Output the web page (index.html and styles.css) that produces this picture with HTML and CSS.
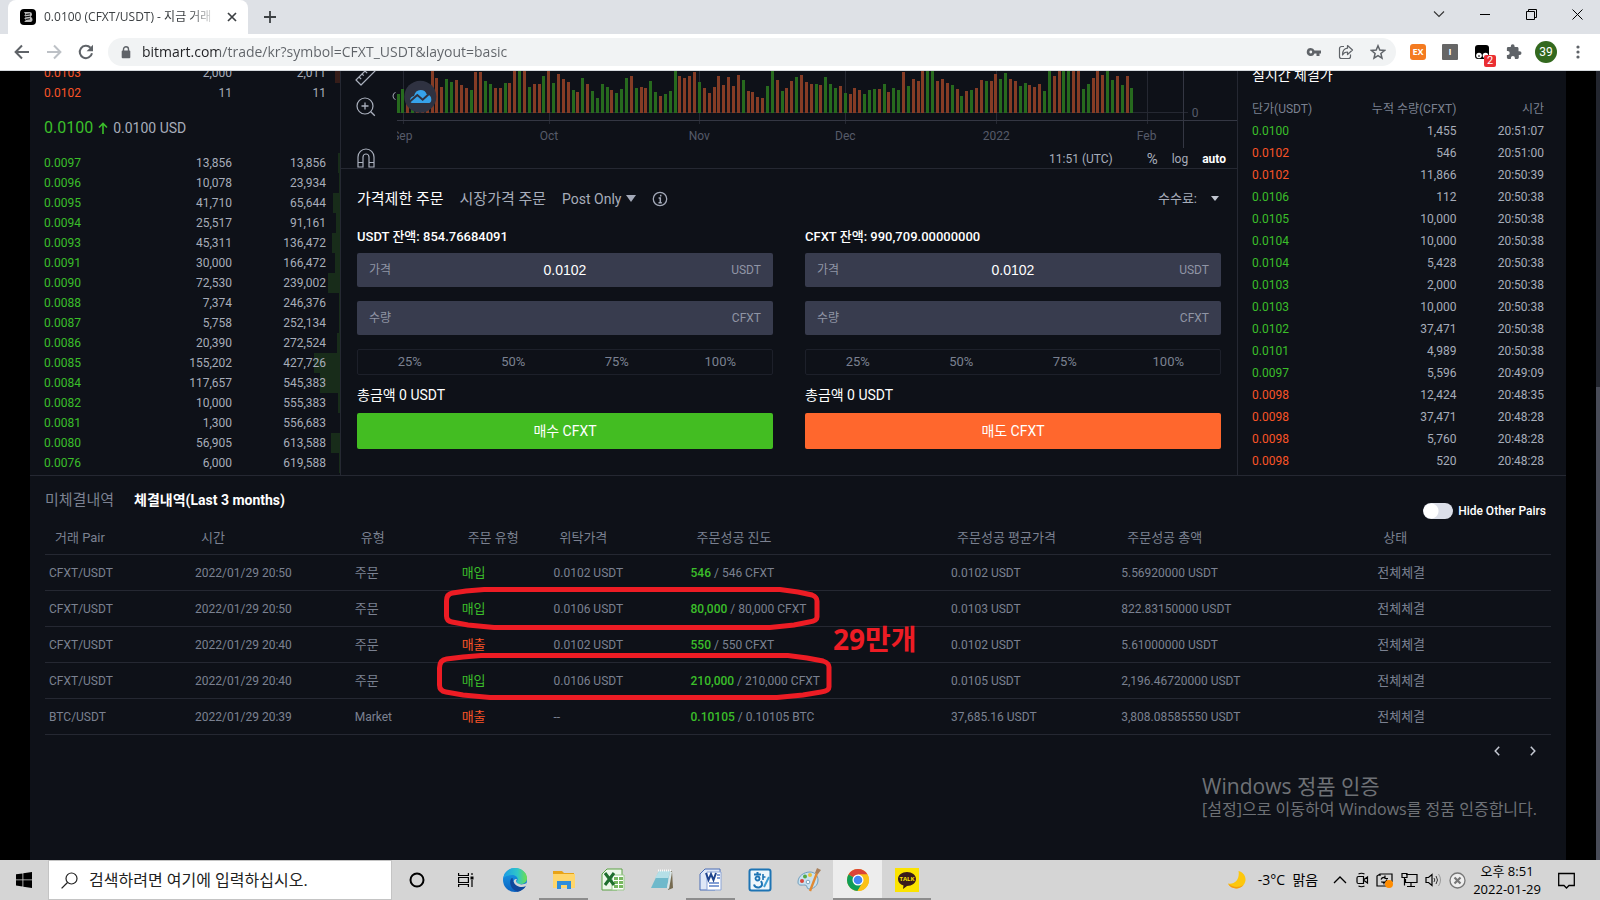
FILE: index.html
```html
<!DOCTYPE html>
<html lang="ko">
<head>
<meta charset="utf-8">
<title>0.0100 (CFXT/USDT) - 지금 거래</title>
<link rel="stylesheet" href="styles.css">
</head>
<body>
<header class="browser">
  <div class="tabstrip">
    <div class="tab">
      <svg class="favicon" width="16" height="16" viewBox="0 0 16 16"><rect width="16" height="16" rx="4" fill="#000"/><path d="M4 3h5.500q2.500 0 2.500 2.300 0 1.700-1.500 2.400 2 .6 2 2.700Q12.500 13 9.500 13H4l1.500-1.200V10L4 9.600l1.600-1V7L4 6.400l1.500-1z" fill="#bbb"/><path d="M6 5.400l4-.5M6 7.800l4-.6M6 10.400l4-.6" stroke="#000" stroke-width="1"/></svg>
      <span class="tab-title">0.0100 (CFXT/USDT) - 지금 거래</span>
      <button class="icon-btn tab-close" aria-label="탭 닫기"><svg width="10" height="10" viewBox="0 0 10 10"><path d="M1 1l8 8M9 1L1 9" stroke="#3c4043" stroke-width="1.700"/></svg></button>
    </div>
    <button class="icon-btn new-tab" aria-label="새 탭"><svg width="12" height="12" viewBox="0 0 12 12"><path d="M6 0v12M0 6h12" stroke="#3c4043" stroke-width="1.800"/></svg></button>
    <div class="window-controls">
      <button class="icon-btn" aria-label="탭 검색"><svg width="12" height="12" viewBox="0 0 12 12"><path d="M1 3.500l5 5 5-5" fill="none" stroke="#333" stroke-width="1.100"/></svg></button>
      <button class="icon-btn" aria-label="최소화"><svg width="10" height="10" viewBox="0 0 10 10"><path d="M0 5.500h10" stroke="#000"/></svg></button>
      <button class="icon-btn" aria-label="이전 크기로"><svg width="11" height="11" viewBox="0 0 11 11"><path d="M.5 2.500h8v8h-8zM2.500 2.500v-2h8v8h-2" fill="none" stroke="#000"/></svg></button>
      <button class="icon-btn" aria-label="닫기"><svg width="11" height="11" viewBox="0 0 11 11"><path d="M.5.5l10 10M10.500.5l-10 10" stroke="#000"/></svg></button>
    </div>
  </div>
  <div class="toolbar">
    <button class="icon-btn" aria-label="뒤로"><svg width="16" height="16" viewBox="0 0 16 16"><path d="M15 8H2M8 1.500L1.600 8 8 14.500" fill="none" stroke="#5f6368" stroke-width="2"/></svg></button>
    <button class="icon-btn" aria-label="앞으로"><svg width="16" height="16" viewBox="0 0 16 16"><path d="M1 8h13M8 1.500L14.400 8 8 14.500" fill="none" stroke="#bdc1c6" stroke-width="2"/></svg></button>
    <button class="icon-btn" aria-label="새로고침"><svg width="16" height="16" viewBox="0 0 16 16"><path d="M14 9.300A6.200 6.200 0 1 1 12.500 3.700" fill="none" stroke="#5f6368" stroke-width="2"/><path d="M15 .8v6.400H8.600z" fill="#5f6368"/></svg></button>
    <div class="omnibox">
      <svg width="10" height="13" viewBox="0 0 10 13"><path d="M2.500 5V3.300a2.500 2.500 0 0 1 5 0V5" fill="none" stroke="#5f6368" stroke-width="1.400"/><rect x=".7" y="4.600" width="8.600" height="7.600" rx="1" fill="#5f6368"/></svg>
      <input class="url" type="text" aria-label="주소창" value="bitmart.com/trade/kr?symbol=CFXT_USDT&amp;layout=basic">
      <button class="icon-btn" aria-label="비밀번호"><svg width="16" height="16" viewBox="0 0 16 16"><path d="M4.800 4a4 4 0 1 0 3.700 5.400h2V12h3V9.400H15V6.600H8.500A4 4 0 0 0 4.800 4zm0 2.600a1.400 1.400 0 1 1 0 2.800 1.400 1.400 0 0 1 0-2.800z" fill="#5f6368"/></svg></button>
      <button class="icon-btn" aria-label="공유"><svg width="16" height="16" viewBox="0 0 16 16"><path d="M6 2.500H3.500a2 2 0 0 0-2 2v8a2 2 0 0 0 2 2h7a2 2 0 0 0 2-2v-2" fill="none" stroke="#5f6368" stroke-width="1.200"/><path d="M9.500 1.500L14.500 6l-5 4.500V8C7 8 5.500 9 4.500 11c0-4 2-6.500 5-6.800z" fill="none" stroke="#5f6368" stroke-width="1.200" stroke-linejoin="round"/></svg></button>
      <button class="icon-btn" aria-label="북마크"><svg width="16" height="16" viewBox="0 0 16 16"><path d="M8 1.800l1.800 4.300 4.700.4-3.600 3 1.100 4.600L8 11.700l-4 2.400 1.100-4.600-3.600-3 4.700-.4z" fill="none" stroke="#5f6368" stroke-width="1.500"/></svg></button>
    </div>
    <button class="icon-btn ext ext-ex" aria-label="EX 확장">EX</button>
    <button class="icon-btn ext ext-i" aria-label="I 확장">I</button>
    <button class="icon-btn ext ext-bw" aria-label="확장"><svg width="14" height="14" viewBox="0 0 14 14"><rect width="14" height="14" rx="3" fill="#000"/><circle cx="4" cy="10.500" r="2.800" fill="#fff"/><circle cx="10.500" cy="10.500" r="2.800" fill="#fff"/><circle cx="4" cy="11" r="1" fill="#555"/></svg><span class="ext-count">2</span></button>
    <button class="icon-btn" aria-label="확장 프로그램"><svg width="16" height="16" viewBox="0 0 16 16"><path d="M13.400 7.200h-.9V4.500c0-.8-.6-1.400-1.400-1.400H8.600v-.9a1.900 1.900 0 0 0-3.800 0v.9H2.200C1.400 3.100.9 3.700.9 4.500V7h.8a2 2 0 0 1 0 4H.9v2.600c0 .8.600 1.400 1.400 1.400h2.600v-.9a2 2 0 0 1 4 0v.9h2.500c.8 0 1.400-.6 1.400-1.400V11h.8a1.900 1.900 0 0 0 0-3.800z" fill="#5f6368"/></svg></button>
    <button class="icon-btn avatar" aria-label="프로필">39</button>
    <button class="icon-btn" aria-label="메뉴"><svg width="4" height="16" viewBox="0 0 4 16"><g fill="#5f6368"><circle cx="2" cy="3" r="1.600"/><circle cx="2" cy="8" r="1.600"/><circle cx="2" cy="13" r="1.600"/></g></svg></button>
  </div>
</header>

<main class="viewport">
  <div class="site">
    <div class="trade-grid">
      <section class="orderbook">
        <table class="book asks">
          <tbody>
            <tr style="--depth:5px"><td>0.0103</td><td>2,000</td><td>2,011</td></tr>
            <tr style="--depth:0px"><td>0.0102</td><td>11</td><td>11</td></tr>
          </tbody>
        </table>
        <div class="last-price"><strong>0.0100</strong><svg width="10" height="13" viewBox="0 0 10 13"><path d="M5 12V1.500M1 5.500l4-4 4 4" fill="none" stroke="#3bbf2a" stroke-width="1.600"/></svg><span>0.0100 USD</span></div>
        <table class="book bids">
          <tbody>
            <tr style="--depth:2px"><td>0.0097</td><td>13,856</td><td>13,856</td></tr>
            <tr style="--depth:1px"><td>0.0096</td><td>10,078</td><td>23,934</td></tr>
            <tr style="--depth:7px"><td>0.0095</td><td>41,710</td><td>65,644</td></tr>
            <tr style="--depth:4px"><td>0.0094</td><td>25,517</td><td>91,161</td></tr>
            <tr style="--depth:8px"><td>0.0093</td><td>45,311</td><td>136,472</td></tr>
            <tr style="--depth:5px"><td>0.0091</td><td>30,000</td><td>166,472</td></tr>
            <tr style="--depth:12px"><td>0.0090</td><td>72,530</td><td>239,002</td></tr>
            <tr style="--depth:1px"><td>0.0088</td><td>7,374</td><td>246,376</td></tr>
            <tr style="--depth:1px"><td>0.0087</td><td>5,758</td><td>252,134</td></tr>
            <tr style="--depth:3px"><td>0.0086</td><td>20,390</td><td>272,524</td></tr>
            <tr style="--depth:26px"><td>0.0085</td><td>155,202</td><td>427,726</td></tr>
            <tr style="--depth:20px"><td>0.0084</td><td>117,657</td><td>545,383</td></tr>
            <tr style="--depth:2px"><td>0.0082</td><td>10,000</td><td>555,383</td></tr>
            <tr style="--depth:0px"><td>0.0081</td><td>1,300</td><td>556,683</td></tr>
            <tr style="--depth:9px"><td>0.0080</td><td>56,905</td><td>613,588</td></tr>
            <tr style="--depth:1px"><td>0.0076</td><td>6,000</td><td>619,588</td></tr>
          </tbody>
        </table>
      </section>

      <section class="center">
        <div class="chart">
          <div class="chart-tools">
            <button class="icon-btn" aria-label="측정"><svg width="24" height="24" viewBox="0 0 24 24"><path d="M2 17L17 2l5 5L7 22z" fill="none" stroke="#aab0bd" stroke-width="1.200" stroke-linejoin="round"/><path d="M5 14l2.200 2.200M8 11l1.700 1.700M11 8l2.200 2.200" stroke="#aab0bd" stroke-width="1.200"/></svg></button>
            <button class="icon-btn" aria-label="확대"><svg width="20" height="20" viewBox="0 0 20 20"><circle cx="9" cy="9" r="8" fill="none" stroke="#aab0bd" stroke-width="1.200"/><path d="M9 5.500v7M5.500 9h7M14.800 14.800l4 4" stroke="#aab0bd" stroke-width="1.300"/></svg></button>
            <button class="icon-btn magnet" aria-label="자석"><svg width="18" height="20" viewBox="0 0 18 20"><path d="M1 19V9a8 8 0 0 1 16 0v10h-5V9a3 3 0 0 0-6 0v10zM1 14.500h5M12 14.500h5" fill="none" stroke="#aab0bd" stroke-width="1.200"/></svg></button>
          </div>
          <button class="icon-btn collapse" aria-label="접기"><svg width="4" height="8" viewBox="0 0 4 8"><path d="M3.500.5Q1 1 1 4t2.500 3.500" fill="none" stroke="#a0a6b3"/></svg></button>
          <div class="chart-main">
            <svg class="volume" width="840" height="79" viewBox="171 33 2520 237">
              <path d="M190 33V191M628 33V191M1078 33V191M1516 33V191M1969 33V191M2422 33V191M171 157H2544" fill="none" stroke="#252832" stroke-width="3"/>
              <path d="M171 181H2691M2530 33V264" fill="none" stroke="#343743" stroke-width="3"/>
              <path fill="none" stroke="#276a1e" stroke-width="9" d="M176 102V158M187 87V158M217 120V158M319 57V158M335 66V158M394 90V158M437 63V158M452 72V158M496 69V158M538 33V158M568 81V158M611 48V158M641 69V158M700 90V158M728 54V158M758 93V158M773 114V158M787 72V158M802 81V158M829 99V158M844 87V158M859 54V158M889 84V158M931 63V158M946 96V158M977 102V158M991 93V158M1006 33V158M1078 66V158M1210 60V158M1282 78V158M1297 33V158M1327 93V158M1369 51V158M1429 72V158M1457 51V158M1471 72V158M1486 84V158M1516 99V158M1573 102V158M1588 90V158M1603 87V158M1633 72V158M1660 84V158M1675 90V158M1705 78V158M1762 33V158M1777 33V158M1837 75V158M1864 108V158M1894 90V158M1939 63V158M1981 57V158M1996 39V158M2041 78V158M2056 69V158M2113 93V158M2128 33V158M2170 33V158M2185 33V158M2230 87V158M2245 72V158M2302 33V158M2317 60V158M2347 75V158M2374 84V158"/>
              <path fill="none" stroke="#853c25" stroke-width="9" d="M202 120V158M232 120V158M247 120V158M262 110V158M277 33V158M290 54V158M305 81V158M350 60V158M365 75V158M380 84V158M407 36V158M422 36V158M467 84V158M482 84V158M508 69V158M523 33V158M553 33V158M584 72V158M598 72V158M625 33V158M656 42V158M671 57V158M686 66V158M713 96V158M742 72V158M814 90V158M875 48V158M904 81V158M916 84V158M961 108V158M1018 48V158M1033 54V158M1048 48V158M1063 36V158M1093 84V158M1108 99V158M1123 81V158M1135 48V158M1150 75V158M1165 51V158M1180 78V158M1195 45V158M1225 93V158M1237 96V158M1252 111V158M1267 114V158M1312 60V158M1340 84V158M1354 63V158M1384 45V158M1400 66V158M1414 72V158M1441 75V158M1501 78V158M1531 102V158M1543 84V158M1558 90V158M1618 87V158M1645 96V158M1690 36V158M1720 57V158M1735 63V158M1747 33V158M1792 63V158M1808 57V158M1822 69V158M1852 87V158M1879 93V158M1909 84V158M1924 60V158M1954 63V158M1966 42V158M2011 57V158M2026 63V158M2068 75V158M2083 81V158M2098 72V158M2143 48V158M2158 33V158M2200 33V158M2215 33V158M2260 54V158M2272 33V158M2287 45V158M2332 48V158M2362 48V158"/>
              <g shape-rendering="auto">
              <circle cx="241" cy="110" r="48" fill="#2f3241"/>
              <path d="M210 122q0-12 12-14 4-18 20-18 14 0 18 13 14 2 14 16 0 10-10 10h-44q-10 0-10-7z" fill="#36a2eb"/>
              <path d="M208 126l24-21 16 14 18-16" fill="none" stroke="#2f3241" stroke-width="6"/>
              </g>
              <g class="axis-text"><text x="187" y="241">Sep</text><text x="627" y="241">Oct</text><text x="1078" y="241">Nov</text><text x="1516" y="241">Dec</text><text x="1969" y="241">2022</text><text x="2420" y="241">Feb</text><text x="2565" y="171">0</text></g>
            </svg>
            <div class="chart-status"><span class="clock-utc">11:51 (UTC)</span><button class="pct">%</button><button>log</button><button class="on">auto</button></div>
          </div>
        </div>

        <div class="order">
          <div class="order-tabs">
            <button class="on">가격제한 주문</button>
            <button>시장가격 주문</button>
            <span class="post-only"><select aria-label="주문 옵션"><option>Post Only</option></select><svg width="10" height="7" viewBox="0 0 10 7"><path d="M0 0h10L5 7z" fill="#a3a9b8"/></svg></span>
            <svg width="16" height="16" viewBox="0 0 16 16"><circle cx="8" cy="8" r="6.700" fill="none" stroke="#a3a9b8" stroke-width="1.300"/><path d="M8.700 3.800v1.700M6.600 7h1.700v4.500M6.500 11.700h3.300" fill="none" stroke="#a3a9b8" stroke-width="1.500"/></svg>
            <button class="fee">수수료: <svg width="8" height="5" viewBox="0 0 8 5"><path d="M0 0h8L4 5z" fill="#c0c5d0"/></svg></button>
          </div>
          <div class="forms">
            <form class="side">
              <p class="balance">USDT 잔액: 854.76684091</p>
              <div class="field"><label for="bp">가격</label><input id="bp" type="text" value="0.0102"><span>USDT</span></div>
              <div class="field"><label for="bq">수량</label><input id="bq" type="text"><span>CFXT</span></div>
              <div class="percent"><button type="button">25%</button><button type="button">50%</button><button type="button">75%</button><button type="button">100%</button></div>
              <p class="total">총금액 0 USDT</p>
              <button type="button" class="submit buy">매수 CFXT</button>
            </form>
            <form class="side">
              <p class="balance">CFXT 잔액: 990,709.00000000</p>
              <div class="field"><label for="sp">가격</label><input id="sp" type="text" value="0.0102"><span>USDT</span></div>
              <div class="field"><label for="sq">수량</label><input id="sq" type="text"><span>CFXT</span></div>
              <div class="percent"><button type="button">25%</button><button type="button">50%</button><button type="button">75%</button><button type="button">100%</button></div>
              <p class="total">총금액 0 USDT</p>
              <button type="button" class="submit sell">매도 CFXT</button>
            </form>
          </div>
        </div>
      </section>

      <section class="trades">
        <h2>실시간 체결가</h2>
        <table>
          <thead><tr><th>단가(USDT)</th><th>누적 수량(CFXT)</th><th>시간</th></tr></thead>
          <tbody>
            <tr><td class="up">0.0100</td><td>1,455</td><td>20:51:07</td></tr>
            <tr><td class="down">0.0102</td><td>546</td><td>20:51:00</td></tr>
            <tr><td class="down">0.0102</td><td>11,866</td><td>20:50:39</td></tr>
            <tr><td class="up">0.0106</td><td>112</td><td>20:50:38</td></tr>
            <tr><td class="up">0.0105</td><td>10,000</td><td>20:50:38</td></tr>
            <tr><td class="up">0.0104</td><td>10,000</td><td>20:50:38</td></tr>
            <tr><td class="up">0.0104</td><td>5,428</td><td>20:50:38</td></tr>
            <tr><td class="up">0.0103</td><td>2,000</td><td>20:50:38</td></tr>
            <tr><td class="up">0.0103</td><td>10,000</td><td>20:50:38</td></tr>
            <tr><td class="up">0.0102</td><td>37,471</td><td>20:50:38</td></tr>
            <tr><td class="up">0.0101</td><td>4,989</td><td>20:50:38</td></tr>
            <tr><td class="up">0.0097</td><td>5,596</td><td>20:49:09</td></tr>
            <tr><td class="down">0.0098</td><td>12,424</td><td>20:48:35</td></tr>
            <tr><td class="down">0.0098</td><td>37,471</td><td>20:48:28</td></tr>
            <tr><td class="down">0.0098</td><td>5,760</td><td>20:48:28</td></tr>
            <tr><td class="down">0.0098</td><td>520</td><td>20:48:28</td></tr>
          </tbody>
        </table>
      </section>
    </div>

    <section class="history">
      <div class="history-head">
        <button>미체결내역</button>
        <button class="on">체결내역(Last 3 months)</button>
        <label class="hide-pairs"><input type="checkbox">Hide Other Pairs</label>
      </div>
      <table class="orders">
        <colgroup><col class="c-pair"><col class="c-time"><col class="c-type"><col class="c-side"><col class="c-price"><col class="c-fill"><col class="c-avg"><col class="c-sum"><col></colgroup>
        <thead><tr><th>거래 Pair</th><th>시간</th><th>유형</th><th>주문 유형</th><th>위탁가격</th><th>주문성공 진도</th><th>주문성공 평균가격</th><th>주문성공 총액</th><th>상태</th></tr></thead>
        <tbody>
          <tr><td>CFXT/USDT</td><td>2022/01/29 20:50</td><td class="ko">주문</td><td class="ko up">매입</td><td>0.0102 USDT</td><td><b>546</b> / 546 CFXT</td><td>0.0102 USDT</td><td>5.56920000 USDT</td><td class="ko">전체체결</td></tr>
          <tr><td>CFXT/USDT</td><td>2022/01/29 20:50</td><td class="ko">주문</td><td class="ko up">매입</td><td>0.0106 USDT</td><td><b>80,000</b> / 80,000 CFXT</td><td>0.0103 USDT</td><td>822.83150000 USDT</td><td class="ko">전체체결</td></tr>
          <tr><td>CFXT/USDT</td><td>2022/01/29 20:40</td><td class="ko">주문</td><td class="ko down">매출</td><td>0.0102 USDT</td><td><b>550</b> / 550 CFXT</td><td>0.0102 USDT</td><td>5.61000000 USDT</td><td class="ko">전체체결</td></tr>
          <tr><td>CFXT/USDT</td><td>2022/01/29 20:40</td><td class="ko">주문</td><td class="ko up">매입</td><td>0.0106 USDT</td><td><b>210,000</b> / 210,000 CFXT</td><td>0.0105 USDT</td><td>2,196.46720000 USDT</td><td class="ko">전체체결</td></tr>
          <tr><td>BTC/USDT</td><td>2022/01/29 20:39</td><td>Market</td><td class="ko down">매출</td><td>--</td><td><b>0.10105</b> / 0.10105 BTC</td><td>37,685.16 USDT</td><td>3,808.08585550 USDT</td><td class="ko">전체체결</td></tr>
        </tbody>
      </table>
      <div class="pager">
        <button class="icon-btn" aria-label="이전"><svg width="6" height="10" viewBox="0 0 6 10"><path d="M5.200.8L1.200 5l4 4.200" fill="none" stroke="#c5c9d3" stroke-width="1.500"/></svg></button>
        <button class="icon-btn" aria-label="다음"><svg width="6" height="10" viewBox="0 0 6 10"><path d="M.8.8L4.800 5l-4 4.200" fill="none" stroke="#c5c9d3" stroke-width="1.500"/></svg></button>
      </div>
      <svg class="mark mark-a" viewBox="0 0 376 43"><path d="M40 2.500H336L354 5l14 3q5 2 5 6V30q0 4-8 5l-15 3-24 2.500H50L24 38 8 35q-5.500-1-5.500-6V14q0-7 6-8L22 4z"/></svg>
      <svg class="mark mark-b" viewBox="0 0 395 47"><path d="M44 2.500H351L370 5l16 3q6 2 6 6V34q0 4-8 5l-18 3-26 2.500H53L26 42 9 39q-6.500-1-6.500-7V15q0-8 7-9L26 4z"/></svg>
      <span class="mark-note">29만개</span>
      <p class="watermark"><span>Windows 정품 인증</span>[설정]으로 이동하여 Windows를 정품 인증합니다.</p>
    </section>
  </div>
  <div class="scrollbar"><div class="thumb"></div></div>
</main>

<footer class="taskbar">
  <button class="icon-btn start" aria-label="시작"><svg width="16" height="16" viewBox="0 0 16 16"><path d="M0 2.300l6.500-.9v6.100H0zM7.300 1.300L16 0v7.500H7.300zM0 8.300h6.500v6.200L0 13.600zM7.300 8.300H16V16l-8.700-1.300z"/></svg></button>
  <label class="search"><svg width="17" height="17" viewBox="0 0 17 17"><circle cx="10.500" cy="6.500" r="5.500" fill="none" stroke="#222" stroke-width="1.200"/><path d="M6.500 10.500L.6 16.400" stroke="#222" stroke-width="1.300"/></svg><input type="text" aria-label="검색" placeholder="검색하려면 여기에 입력하십시오."></label>
  <nav class="apps">
    <button aria-label="Cortana"><svg width="16" height="16" viewBox="0 0 16 16"><circle cx="8" cy="8" r="6.500" fill="none" stroke="#000" stroke-width="2"/></svg></button>
    <button aria-label="작업 보기"><svg width="16" height="16" viewBox="0 0 16 16"><path d="M.6 1v2.500h9.800V1M.6 15v-2.500h9.800V15M.6 5.500h9.800v5H.6zM14 1v2M14 8v7" fill="none" stroke="#000" stroke-width="1.200"/><path d="M12.500 4.500h3v3h-3z"/></svg></button>
    <button aria-label="Edge"><svg width="24" height="24" viewBox="0 0 24 24"><defs><linearGradient id="e1"><stop stop-color="#1a9be6"/><stop offset=".6" stop-color="#2fc6c8"/><stop offset="1" stop-color="#6ee04c"/></linearGradient><linearGradient id="e2" x2="0" y2="1"><stop stop-color="#1aa0ea"/><stop offset="1" stop-color="#0b62c0"/></linearGradient></defs><circle cx="12" cy="12" r="12" fill="url(#e2)"/><path d="M.3 10C1.500 3.500 7 0 12 0c7 0 12 5 12 10 0 4-3 6-6 6-3.500 0-5-1.500-4-3 2-3-1-6-5-6-4 0-7 1.500-8.700 3z" fill="url(#e1)"/><path d="M9.500 9.500C5 12 7 21.500 14.500 23.700 19 23 22 20 22.800 18c-6 3-13-1-13.300-8.500z" fill="#10479b"/><path d="M14 11c-1 1-1.500 3 .5 4.300 3 2 6.500 1 9.500-.3l-1.200 3c-3.500 2-10.300 1-12-4-.5-2 1-3.500 3.200-3z" fill="#d5d5d5"/></svg></button>
    <button class="open stacked" aria-label="파일 탐색기"><svg width="24" height="24" viewBox="0 0 24 24"><path d="M1 3h9l2 2h10v14H1z" fill="#e8a317"/><path d="M1 6h22v14H1z" fill="#ffd66b"/><path d="M5 21v-8h14v8h-4v-4H9v4z" fill="#2f8ddb"/></svg></button>
    <button aria-label="Excel"><svg width="24" height="24" viewBox="0 0 24 24"><path d="M1 6l5-5h15v15l-5 6H1z" fill="#eef7ea" stroke="#5aa244"/><path d="M11 7h12v15H11z" fill="#fff" stroke="#9ccb8d"/><path d="M13 9h4v3h-4zM18 9h4v3h-4zM13 13h4v3h-4zM18 13h4v3h-4zM13 17h4v3h-4zM18 17h4v3h-4z" fill="#77b860"/><path d="M4 5l9 12M13 5L4 17" stroke="#1f6e2e" stroke-width="3"/></svg></button>
    <button aria-label="메모장"><svg width="24" height="24" viewBox="0 0 24 24"><path d="M20 3h2l1 17-5 2z" fill="#766b51"/><path d="M9 3h11l-3 17H1z" fill="#6fb9cb"/><path d="M9 3h11l-1.500 7H5z" fill="#b5dfe7"/><path d="M8 2.500h14" stroke="#fafafa" stroke-width="2" stroke-dasharray="1 1"/><path d="M20 3l-3 17 2 1 3-17z" fill="#d9e6e8"/></svg></button>
    <button class="open" aria-label="Word"><svg width="24" height="24" viewBox="0 0 24 24"><path d="M1 6l5-5h15v15l-5 6H1z" fill="#dfe8f7" stroke="#4a6db5"/><path d="M8 4h14v18H8z" fill="#fff" stroke="#8ba5d8"/><path d="M10 15h10M10 18h10M18 7h3M18 10h3" stroke="#5b80c7" stroke-width="1.600"/><path d="M7 5l2.500 7L12 6l2.500 6L17 5" fill="none" stroke="#1f458e" stroke-width="2"/></svg></button>
    <button aria-label="한글"><svg width="24" height="24" viewBox="0 0 24 24"><rect x="1.500" y="1.500" width="21" height="21" rx="2" fill="#eef6fb" stroke="#1d74b4" stroke-width="2"/><path d="M6 6.500h7M9.500 4v2.500M13 13q3 5-2 6.500-4 .5-5-3" fill="none" stroke="#1d74b4" stroke-width="2"/><path d="M15 6v6M15 9h2.500" stroke="#1d74b4" stroke-width="1.600"/><circle cx="9.500" cy="10.500" r="2" fill="none" stroke="#1d74b4" stroke-width="1.800"/><path d="M21 9l-5 10" stroke="#3b9cd2" stroke-width="2"/></svg></button>
    <button aria-label="그림판"><svg width="24" height="24" viewBox="0 0 24 24"><path d="M1 14C1 8 7 4 13 4c5 0 8 4 8 8 0 6-5 9-9 9-3 0-1-4-4-4-4 0-7 1-7-3z" fill="#c9e1f0" stroke="#6f9fbe"/><circle cx="5" cy="13" r="2" fill="#d9453a"/><circle cx="8" cy="8.500" r="2" fill="#54a944"/><circle cx="13" cy="7" r="2" fill="#e9c23c"/><circle cx="11" cy="14" r="1.800" fill="#fff" stroke="#7aa2bc"/><path d="M20 5l-7 18" stroke="#e08a35" stroke-width="2.400"/><path d="M18 5l2-5 4 2-3 4z" fill="#a9805b"/></svg></button>
    <button class="open active" aria-label="Chrome"><svg width="24" height="24" viewBox="0 0 24 24"><circle cx="12" cy="12" r="11" fill="#fbc116"/><path d="M12 12L2.470 6.500A11 11 0 0 1 21.530 6.500H12z" fill="#db4437"/><path d="M12 12L2.470 6.500A11 11 0 0 0 11.500 23l5-8.500z" fill="#0f9d58"/><path d="M12 6.500h9.530A11 11 0 0 1 11.500 23l5.260-8.200z" fill="#fbc116"/><circle cx="12" cy="12" r="5.500" fill="#fff"/><circle cx="12" cy="12" r="4.300" fill="#4285f4"/></svg></button>
    <button class="open" aria-label="카카오톡"><svg width="24" height="24" viewBox="0 0 24 24"><rect width="24" height="24" fill="#fbe300"/><path d="M12 4c5 0 9 3 9 7s-4 7-9 7l-4 3 .5-3.500C5 16.500 3 14 3 11c0-4 4-7 9-7z" fill="#391b1b"/><text x="12" y="13" class="talk">TALK</text></svg></button>
  </nav>
  <div class="tray">
    <svg width="20" height="20" viewBox="0 0 20 20"><path d="M11.500 1c7 2 9 9 5 14C12.500 20 4 19.500 1 13.500c7 1.500 12-5 10.500-12.500z" fill="#fdc70c"/><path d="M1 13.500c3 6 11.500 6.500 15.500 1.500-5 3-11 2.500-15.500-1.500z" fill="#f49b12"/></svg>
    <span class="weather">-3°C&nbsp; 맑음</span>
    <svg class="tray-up" width="14" height="8" viewBox="0 0 14 8"><path d="M1 7l6-6 6 6" fill="none" stroke="#000" stroke-width="1.300"/></svg>
    <svg width="13" height="16" viewBox="0 0 13 16"><path d="M2.500 4.500h5v7h-5q-1.500 0-1.500-1.500V6q0-1.500 1.500-1.500zM8 7.500L11.500 5v6L8 8.500M2.500 2q3-1.500 6 0M2.500 14q3 1.500 6 0" fill="none" stroke="#000" stroke-width="1.200"/></svg>
    <svg width="18" height="18" viewBox="0 0 18 18"><path d="M11 15H1V5l3-2h12v8M4 3v2" fill="none" stroke="#000" stroke-width="1.200"/><path d="M5 8.500q1-2.500 4-2M11 8.500Q10 12 6.500 11.500M9 4.500v3h3M8 13.500V11H5" fill="none" stroke="#000" stroke-width="1.200"/><circle cx="13" cy="13" r="4" fill="#ff8c00"/></svg>
    <svg width="17" height="16" viewBox="0 0 17 16"><path d="M5 2.500h11v8H4.500V7M1 1.500h5v4H1zM3.500 5.500v8M10 11v3M6 14.500h8" fill="none" stroke="#000" stroke-width="1.200"/></svg>
    <svg width="17" height="14" viewBox="0 0 17 14"><path d="M1 4.500h2.500L7 1.500v11L3.500 9.500H1z" fill="none" stroke="#000" stroke-width="1.200"/><path d="M9 5q1.500 2 0 4M11 3q3 4 0 8" fill="none" stroke="#333"/><path d="M13.500 1q4 6 0 12" fill="none" stroke="#999"/></svg>
    <svg width="17" height="17" viewBox="0 0 17 17"><circle cx="8.500" cy="8.500" r="7.500" fill="#eee" stroke="#777" stroke-width="1.300"/><path d="M5.500 5.500l6 6M11.500 5.500l-6 6" stroke="#777" stroke-width="2.200"/></svg>
    <time class="clock">오후 8:51<br>2022-01-29</time>
    <svg class="notice" width="17" height="17" viewBox="0 0 17 17"><path d="M.7 1.500h15.600v12H11L8.500 16 6 13.500H.7z" fill="none" stroke="#000" stroke-width="1.300"/></svg>
  </div>
</footer>
</body>
</html>
```
FILE: styles.css
```css
:root {
  --panel: #0e1118;
  --line: #252832;
  --text: #a7adba;
  --muted: #7b8191;
  --up: #3bbf2a;
  --down: #fa5427;
}

* { box-sizing: border-box; }

body {
  margin: 0;
  height: 100vh;
  display: flex;
  flex-direction: column;
  overflow: hidden;
  background: #000;
  color: var(--text);
  font: 12px/20px Roboto, "Noto Sans CJK KR", sans-serif;
}

button, select, input {
  font: inherit;
  color: inherit;
  background: none;
  border: 0;
  padding: 0;
  margin: 0;
}

p, h2 { margin: 0; }

table { border-collapse: collapse; width: 100%; table-layout: fixed; }
th, td { padding: 0; font-weight: 400; text-align: left; white-space: nowrap; }

.icon-btn { display: flex; align-items: center; justify-content: center; flex: none; }
.up { color: var(--up); }
.down { color: var(--down); }

/* Browser frame */
.browser {
  flex: none;
  color: #3c4043;
  background: #fff;
  border-bottom: 1px solid #d5d9dd;
  font-family: "Open Sans", "Noto Sans CJK KR", sans-serif;
}
.tabstrip { display: flex; height: 34px; padding-left: 8px; background: #dee1e6; }
.tab {
  display: flex;
  align-items: center;
  width: 240px;
  padding: 0 8px 0 12px;
  background: #fff;
  border-radius: 8px 8px 0 0;
}
.tab-title {
  flex: 1;
  margin: 0 8px;
  overflow: hidden;
  white-space: nowrap;
  -webkit-mask-image: linear-gradient(90deg, #000 85%, transparent);
  mask-image: linear-gradient(90deg, #000 85%, transparent);
}
.tab-close { width: 16px; }
.new-tab { width: 44px; }
.window-controls { display: flex; margin-left: auto; height: 28px; }
.window-controls .icon-btn { width: 46px; }

.toolbar { display: flex; align-items: center; height: 36px; padding: 0 6px; }
.toolbar > .icon-btn { width: 32px; }
.omnibox {
  flex: 1;
  display: flex;
  align-items: center;
  height: 28px;
  margin: 0 6px;
  padding: 0 2px 0 13px;
  border-radius: 14px;
  background: #f1f3f4;
}
.omnibox .icon-btn { width: 32px; }
.url {
  flex: 1;
  margin-left: 11px;
  font-size: 14px;
  color: #5f6368;
  background: linear-gradient(90deg, #202124 77px, #5f6368 77px);
  -webkit-background-clip: text;
  background-clip: text;
  -webkit-text-fill-color: transparent;
}
.ext { position: relative; color: #fff; font: 700 9px/16px "Open Sans", sans-serif; }
.toolbar > .ext-ex, .toolbar > .ext-i { width: 16px; height: 16px; margin: 0 8px; background: #f47b20; border-radius: 3px; }
.toolbar > .ext-i { background: #666; border-radius: 1px; }
.ext-count {
  position: absolute;
  left: 18px;
  top: 10px;
  width: 12px;
  height: 12px;
  border-radius: 2px;
  background: #ea2f33;
  font: 11px/12px Roboto, sans-serif;
}
.toolbar > .avatar {
  width: 22px;
  height: 22px;
  margin: 0 5px;
  border-radius: 50%;
  background: #33691e;
  color: #fff;
  font-family: Roboto, sans-serif;
}

/* Page */
.viewport { flex: 1; min-height: 0; display: flex; gap: 30px; padding-left: 30px; }
.site { flex: 1; min-width: 0; background: var(--panel); overflow: hidden; }
.scrollbar { width: 4px; background: #23262f; padding-top: 316px; }
.thumb { height: 100%; background: #484b57; }

.trade-grid {
  display: grid;
  grid-template-columns: 310px 1fr 329px;
  border-bottom: 1px solid var(--line);
  overflow: hidden;
}

/* Order book */
.orderbook { margin-top: -8px; }
.book tr {
  height: 20px;
  background: linear-gradient(#182c1a, #182c1a) no-repeat right / var(--depth) 100%;
}
.book.asks tr { background-image: linear-gradient(#361d19, #361d19); }
.book td { width: 94px; text-align: right; }
.book td:first-child { width: 108px; padding-left: 14px; text-align: left; color: var(--up); }
.book.asks td:first-child { color: var(--down); }
.book td:last-child { width: 108px; padding-right: 14px; }
.last-price {
  display: flex;
  align-items: center;
  gap: 5px;
  height: 50px;
  padding-left: 14px;
  font-size: 14px;
}
.last-price strong { font-size: 16px; font-weight: 400; color: var(--up); }

/* Chart */
.center { border-left: 1px solid var(--line); min-width: 0; }
.chart { display: flex; height: 98px; border-bottom: 1px solid var(--line); overflow: hidden; }
.chart-tools { width: 50px; display: flex; flex-direction: column; align-items: center; gap: 10px; margin-top: -8px; }
.chart-tools .magnet { margin-top: auto; }
.collapse { width: 6px; height: 50px; }
.chart-main { flex: 1; min-width: 0; }
.volume { display: block; max-width: none; shape-rendering: crispEdges; }
.axis-text { fill: #565b69; font-size: 36px; text-anchor: middle; }
.chart-status { display: flex; justify-content: flex-end; gap: 14px; padding-right: 11px; height: 18px; line-height: 18px; }
.clock-utc { margin-right: 20px; }
.chart-status .pct { font-size: 15px; }
.chart-status .on { color: #fff; font-weight: 700; }

/* Order form */
.order { padding: 16px; }
.order-tabs { display: flex; align-items: center; gap: 16px; height: 27px; font-size: 15px; }
.order-tabs .on { color: #fff; font-weight: 400; }
.post-only { display: flex; align-items: center; gap: 4px; font-size: 14px; }
.post-only select { appearance: none; }
.order-tabs .fee { display: flex; align-items: center; gap: 14px; margin-left: auto; font-size: 13px; }
.fee svg { margin-right: 2px; }
.forms { display: grid; grid-template-columns: 1fr 1fr; gap: 32px; margin-top: 15px; }
.balance { height: 26px; color: #fff; font-size: 13px; font-weight: 500; }
.field {
  display: grid;
  grid-template-columns: 80px 1fr 80px;
  align-items: center;
  height: 34px;
  margin-bottom: 14px;
  padding: 0 12px;
  border-radius: 2px;
  background: #383c4e;
  color: #9095a5;
}
.field input { min-width: 0; text-align: center; color: #fff; font: 14px "Liberation Sans", sans-serif; }
.field span { text-align: right; }
.percent { display: flex; height: 26px; border: 1px solid #1d202a; border-radius: 2px; color: var(--muted); font-size: 13px; }
.percent button { flex: 1; }
.total { padding: 10px 0 8px; color: #fff; font-size: 14px; }
.submit { display: block; width: 100%; height: 36px; border-radius: 2px; color: #fff; font-size: 14px; }
.buy { background: #43bd22; }
.sell { background: #ff672d; }

/* Trades */
.trades { margin-top: -6px; padding: 0 22px 3px 14px; border-left: 1px solid var(--line); }
.trades h2 { color: #fff; font-size: 14px; font-weight: 400; line-height: 20px; }
.trades table { margin-top: 12px; }
.trades tr { height: 22px; }
.trades thead tr { height: 23px; color: var(--muted); }
.trades th, .trades td { text-align: right; }
.trades th:first-child, .trades td:first-child { text-align: left; }
.trades th:nth-child(2) { width: 40%; }
.trades th:last-child { width: 30%; }

/* Order history */
.history { position: relative; padding: 10px 15px 0; color: var(--muted); height: 100%; }
.history-head { display: flex; gap: 20px; height: 41px; font-size: 15px; align-items: flex-start; }
.history-head button { height: 28px; }
.history-head .on { color: #fff; font-weight: 700; font-size: 14px; }
.hide-pairs {
  display: flex;
  align-items: center;
  gap: 5px;
  margin: 15px 5px 0 auto;
  color: #fff;
  font-size: 12px;
  font-weight: 500;
}
.hide-pairs input {
  appearance: none;
  width: 30px;
  height: 16px;
  border-radius: 8px;
  background: radial-gradient(circle at 8px 8px, #fff 7px, #dbdee8 8px);
}
.orders tr { height: 36px; border-bottom: 1px solid var(--line); }
.orders thead tr { height: 27px; }
.orders th { padding: 0 0 6px 10px; line-height: 21px; font-size: 13px; }
.orders td { padding-left: 4px; }
.orders .ko { font-size: 13px; }
.orders b { font-weight: 500; color: var(--up); }
.c-pair { width: 9.7%; }
.c-time { width: 10.6%; }
.c-type { width: 7.1%; }
.c-side { width: 6.1%; }
.c-price { width: 9.1%; }
.c-fill { width: 17.3%; }
.c-avg { width: 11.3%; }
.c-sum { width: 17%; }
.pager { display: flex; justify-content: flex-end; height: 32px; }
.pager .icon-btn { width: 36px; }

/* Hand-drawn marks and activation notice over the page */
.mark { position: absolute; fill: none; stroke: #ed1c24; stroke-width: 5; }
.mark-a { left: 414px; top: 111px; width: 376px; height: 43px; }
.mark-b { left: 407px; top: 177px; width: 395px; height: 47px; }
.mark-note {
  position: absolute;
  left: 803px;
  top: 146px;
  color: #ed1c24;
  font: 700 28px/34px "Open Sans", "Noto Sans CJK KR", sans-serif;
}
.watermark {
  position: absolute;
  right: 29px;
  top: 297px;
  color: #6e7176;
  font: 16px/21px "Open Sans", "Noto Sans CJK KR", sans-serif;
}
.watermark span { display: block; font-size: 21px; line-height: 26px; }

/* Taskbar */
.taskbar {
  flex: none;
  display: flex;
  height: 40px;
  background: #d5d5d5;
  color: #000;
  font-family: "Open Sans", "Noto Sans CJK KR", sans-serif;
}
.start { width: 48px; }
.search {
  display: flex;
  align-items: center;
  gap: 11px;
  width: 344px;
  padding-left: 12px;
  background: #fff;
  border: 1px solid #c4c4c4;
}
.search input { flex: 1; font-size: 16px; }
.search input::placeholder { color: #222; opacity: 1; }
.apps { display: flex; }
.apps button { display: flex; align-items: center; justify-content: center; width: 49px; border-bottom: 2px solid transparent; padding-top: 2px; }
.apps .open { border-bottom-color: #8d8d8d; }
.apps .active { background: #ededed; }
.talk { fill: #fbe300; font: 700 6px "Open Sans", sans-serif; text-anchor: middle; }
.tray { display: flex; align-items: center; gap: 7px; margin-left: auto; padding-right: 25px; }
.weather { margin: 0 8px 0 4px; font-size: 14px; white-space: nowrap; }
.tray-up { margin-right: 2px; }
.clock { font-size: 13px; line-height: 18px; text-align: center; }
.notice { margin-left: 10px; }
```
